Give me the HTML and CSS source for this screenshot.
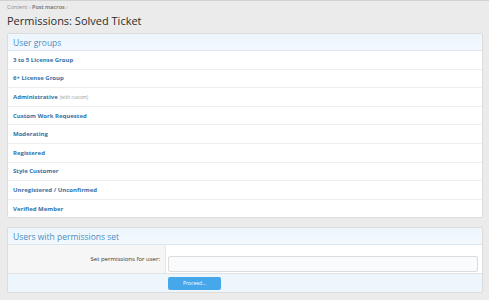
FILE: index.html
```html
<!DOCTYPE html>
<html lang="en">
<head>
    <meta charset="UTF-8">
    <title>Permissions: Solved Ticket</title>
    <link rel="stylesheet" href="styles.css">
</head>
<body>
    <div class="page">
        <div class="breadcrumbs">
            <a href="#">Content</a> <span class="sep">&rsaquo;</span>
            <a href="#" class="current">Post macros</a> <span class="sep">&rsaquo;</span>
        </div>
        <h1 class="title">Permissions: Solved Ticket</h1>

        <div class="block">
            <h2 class="block-header">User groups</h2>
            <ul class="group-list">
                <li><a href="#">3 to 5 License Group</a></li>
                <li><a href="#">6+ License Group</a></li>
                <li><a href="#">Administrative</a> <span class="hint">(with custom)</span></li>
                <li><a href="#">Custom Work Requested</a></li>
                <li><a href="#">Moderating</a></li>
                <li><a href="#">Registered</a></li>
                <li><a href="#">Style Customer</a></li>
                <li><a href="#">Unregistered / Unconfirmed</a></li>
                <li><a href="#">Verified Member</a></li>
            </ul>
        </div>

        <div class="block">
            <h2 class="block-header">Users with permissions set</h2>
            <div class="form-row">
                <label for="username" class="form-label">Set permissions for user:</label>
                <div class="form-input">
                    <input type="text" id="username">
                </div>
            </div>
            <div class="form-footer">
                <button>Proceed...</button>
            </div>
        </div>
    </div>
</body>
</html>
```

FILE: styles.css
```css
body {
    margin: 0;
    padding: 0;
    background: #ebebeb;
    border-top: 1px solid #d2d2d2;
    font-family: 'Open Sans', Arial, sans-serif;
    color: #333;
}
a {
    text-decoration: none;
}
.page {
    padding: 0 6px 0 7px;
}
.breadcrumbs {
    padding-top: 2px;
    height: 9px;
    font-size: 5.5px;
    line-height: 9px;
    color: #999;
}
.breadcrumbs a {
    color: #8e8e8e;
}
.breadcrumbs a.current {
    color: #6a6a6a;
    font-weight: 600;
}
.title {
    margin: 0;
    height: 21px;
    font-size: 11px;
    font-weight: 400;
    line-height: 17px;
    color: #2d2d2d;
}
.block {
    background: #fff;
    border: 1px solid #dcdcdc;
    border-radius: 2px;
    margin-bottom: 9px;
    overflow: hidden;
}
.block-header {
    margin: 0;
    height: 16px;
    padding: 0 5px;
    font-size: 8.5px;
    font-weight: 400;
    line-height: 17px;
    color: #4d8cc3;
    background: linear-gradient(to bottom, #edf6fd, #f3f9fe);
    border-bottom: 1px solid #dbe6ef;
}
.group-list {
    list-style: none;
    margin: 0;
    padding: 0;
}
.group-list li {
    height: 17.6px;
    padding: 0 5px;
    border-top: 1px solid #eeeeee;
    display: flex;
    align-items: center;
    font-size: 6px;
}
.group-list li:first-child {
    border-top: none;
}
.group-list a {
    color: #3572a7;
    font-weight: 700;
}
.hint {
    margin-left: 2px;
    font-size: 4.5px;
    color: #999;
}
.form-row {
    display: flex;
    height: 28px;
    border-bottom: 1px solid #e2e2e2;
}
.form-label {
    width: 152px;
    padding-right: 5px;
    background: #f6f6f6;
    border-right: 1px solid #e6e6e6;
    text-align: right;
    font-size: 6px;
    line-height: 28px;
    color: #333;
}
.form-input {
    flex: 1;
    padding: 6px 4px 0 2px;
}
.form-input input {
    box-sizing: border-box;
    width: 100%;
    height: 16px;
    border: 1px solid #dcdcdc;
    border-radius: 2px;
    background: #f9fbfd;
    margin: 0;
    padding: 0 4px;
}
.form-footer {
    height: 18px;
    padding: 3px 0 0 160px;
    background: #edf6fd;
    box-sizing: border-box;
}
.form-footer button {
    display: block;
    width: 53px;
    height: 13px;
    padding: 0;
    border: none;
    border-radius: 2px;
    background: #47a7eb;
    color: #fff;
    font-family: 'Open Sans', Arial, sans-serif;
    font-size: 5px;
    line-height: 13px;
    cursor: pointer;
}
```
